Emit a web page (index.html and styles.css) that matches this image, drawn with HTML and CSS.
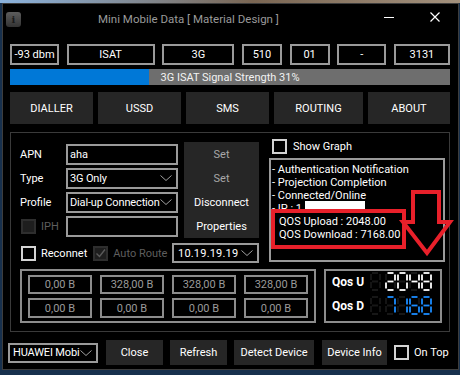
FILE: index.html
```html
<!DOCTYPE html>
<html lang="en">
<head>
  <meta charset="UTF-8" />
  <title>Mini Mobile Data</title>
  <link rel="stylesheet" href="styles.css">
</head>
<body>
  <div class="window">
    <header class="titlebar">
      <span class="app-icon">i</span>
      <span class="title">Mini Mobile Data [ Material Design ]</span>
      <span class="win-min"></span>
      <span class="win-close">
        <svg width="10" height="10" viewBox="0 0 10 10"><path d="M0.5 0.5L9.5 9.5M9.5 0.5L0.5 9.5" stroke="#fff" stroke-width="1.2" fill="none"/></svg>
      </span>
    </header>

    <div class="content">
      <div class="info-row">
        <div class="info w-dbm">-93 dbm</div>
        <div class="info w-op">ISAT</div>
        <div class="info w-net">3G</div>
        <div class="info w-mcc">510</div>
        <div class="info w-mnc">01</div>
        <div class="info w-lac">-</div>
        <div class="info w-cell">3131</div>
      </div>

      <div class="signal">
        <div class="signal-fill" style="width:31.6%"></div>
        <span>3G ISAT Signal Strength 31%</span>
      </div>

      <nav class="tabs">
        <button class="tab t-dialler">DIALLER</button>
        <button class="tab t-ussd">USSD</button>
        <button class="tab t-sms">SMS</button>
        <button class="tab t-routing">ROUTING</button>
        <button class="tab t-about">ABOUT</button>
      </nav>

      <section class="panel">
        <div class="upper">
          <div class="left-col">
            <div class="form-grid">
              <div class="fields">
                <span class="lbl">APN</span>
                <div class="input">aha</div>
                <span class="lbl">Type</span>
                <div class="select">3G Only<svg class="chev" width="12" height="6" viewBox="0 0 12 6"><path d="M0.5 0.5L6 5.5L11.5 0.5" stroke="#a0a0a0" fill="none"/></svg></div>
                <span class="lbl">Profile</span>
                <div class="select">Dial-up Connection<svg class="chev" width="12" height="6" viewBox="0 0 12 6"><path d="M0.5 0.5L6 5.5L11.5 0.5" stroke="#a0a0a0" fill="none"/></svg></div>
                <span class="check-label disabled"><span class="check check-dis"></span>IPH</span>
                <div class="input"></div>
              </div>
              <div class="side-buttons">
                <button class="side dim">Set</button>
                <button class="side dim">Set</button>
                <button class="side">Disconnect</button>
                <button class="side">Properties</button>
              </div>
            </div>

            <div class="route-row">
              <span class="check-label"><span class="check"></span>Reconnet</span>
              <span class="check-label disabled auto">
                <span class="check check-dis">
                  <svg width="11" height="11" viewBox="0 0 11 11"><path d="M1.5 5.5L4.5 8.5L10 1.5" stroke="#5a5a5a" stroke-width="1.4" fill="none"/></svg>
                </span>Auto Route</span>
              <div class="select ip-select">10.19.19.19<svg class="chev" width="12" height="6" viewBox="0 0 12 6"><path d="M0.5 0.5L6 5.5L11.5 0.5" stroke="#a0a0a0" fill="none"/></svg></div>
            </div>
          </div>

          <div class="right-col">
            <span class="check-label graph"><span class="check"></span>Show Graph</span>
            <div class="log">
              <div>- Authentication Notification</div>
              <div>- Projection Completion</div>
              <div>- Connected/Online</div>
              <div>- IP : 1</div>
              <div class="qos-line">QOS Upload : 2048.00</div>
              <div class="qos-line">QOS Download : 7168.00</div>
              <span class="redact"></span>
            </div>
          </div>
        </div>

        <div class="stats-row">
          <div class="stats">
            <div class="cell">0,00 B</div>
            <div class="cell">328,00 B</div>
            <div class="cell">328,00 B</div>
            <div class="cell">328,00 B</div>
            <div class="cell">0,00 B</div>
            <div class="cell">0,00 B</div>
            <div class="cell">0,00 B</div>
            <div class="cell">0,00 B</div>
          </div>
          <div class="qos">
            <div class="qos-row"><b>Qos U</b><svg class="seg up" data-value=" 2048" width="64" height="19"></svg></div>
            <div class="qos-row"><b>Qos D</b><svg class="seg down" data-value=" 7168" width="64" height="19"></svg></div>
          </div>
        </div>
      </section>

      <footer class="bottom-bar">
        <div class="select dev-select">HUAWEI Mobi<svg class="chev" width="12" height="6" viewBox="0 0 12 6"><path d="M0.5 0.5L6 5.5L11.5 0.5" stroke="#a0a0a0" fill="none"/></svg></div>
        <button class="btn b-close">Close</button>
        <button class="btn b-refresh">Refresh</button>
        <button class="btn b-detect">Detect Device</button>
        <button class="btn b-info">Device Info</button>
        <span class="check-label on-top"><span class="check"></span>On Top</span>
      </footer>
    </div>

    <!-- annotations drawn over the screenshot -->
    <svg class="annotations" width="455" height="366" viewBox="3 4 455 366">
      <rect x="273" y="211" width="131" height="36" fill="none" stroke="#e8202a" stroke-width="4"/>
      <path d="M413 192H439V222H450L427 253L403 222H413Z" fill="none" stroke="#e8202a" stroke-width="4" stroke-linejoin="miter"/>
    </svg>
  </div>

  <script>
    // seven segment digits for the QOS readout
    const SEGS = {
      a: "M2.5 1H8.5", b: "M10 2.5V8.5", c: "M10 10.5V16.5", d: "M2.5 18H8.5",
      e: "M1 10.5V16.5", f: "M1 2.5V8.5", g: "M2.5 9.5H8.5"
    };
    const DIGITS = {
      "0": "abcdef", "1": "bc", "2": "abdeg", "3": "abcdg", "4": "bcfg",
      "5": "acdfg", "6": "acdefg", "7": "abc", "8": "abcdefg", "9": "abcdfg", " ": ""
    };
    const OFFSETS = [0, 15, 27, 39, 51];

    document.querySelectorAll("svg.seg").forEach((svg) => {
      const value = svg.dataset.value;
      let html = "";
      [...value].forEach((ch, i) => {
        const lit = DIGITS[ch] || "";
        html += `<g transform="translate(${OFFSETS[i]},0)">`;
        Object.keys(SEGS).forEach((s) => {
          const cls = lit.includes(s) ? "on" : "off";
          html += `<path class="${cls}" d="${SEGS[s]}"/>`;
        });
        html += "</g>";
      });
      svg.innerHTML = html;
    });
  </script>
</body>
</html>
```

FILE: styles.css
```css
* { margin: 0; padding: 0; box-sizing: border-box; }
body { background: linear-gradient(90deg, #8bb3de, #7a6653 55%, #a3917d) top / 100% 3px no-repeat, #17304d; font-family: Roboto, sans-serif; font-size: 11px; color: #fff; white-space: nowrap; }
button { font: inherit; color: #fff; border: none; background: #262626; cursor: pointer; white-space: nowrap; }

.window { position: relative; margin: 3px 0 0 2px; width: 457px; height: 367px; background: #000; border: 1px solid #3d3d3d; }

/* title bar */
.titlebar { height: 30px; display: flex; align-items: center; }
.app-icon { width: 15px; height: 15px; margin-left: 3px; border-radius: 3px; background: linear-gradient(#5c5c5c, #333); color: #1a1a1a; font: bold 10px 'DejaVu Serif', serif; display: flex; align-items: center; justify-content: center; }
.title { margin-left: 77px; font-size: 11.5px; color: #9a9a9a; }
.win-min { margin-left: auto; width: 10px; height: 1px; background: #fff; margin-top: -3px; }
.win-close { margin-left: 36px; margin-right: 18px; display: flex; margin-top: -5px; }

.content { padding: 0 8px 0 7px; }

/* top info boxes */
.info-row { margin-top: 10px; height: 21px; display: flex; justify-content: space-between; }
.info { border: 2px solid #9a9a9a; display: flex; align-items: center; justify-content: center; }
.w-dbm { width: 49px; }
.w-op { width: 88px; }
.w-net { width: 72px; }
.w-mcc, .w-mnc { width: 40px; }
.w-lac { width: 49px; }
.w-cell { width: 56px; }

.signal { position: relative; margin-top: 4px; height: 16px; background: #6e6e6e; display: flex; align-items: center; justify-content: center; }
.signal-fill { position: absolute; left: 0; top: 0; bottom: 0; background: #0078d7; }
.signal span { position: relative; color: #f2f2f2; }

/* tabs */
.tabs { margin-top: 7px; height: 32px; display: flex; gap: 5px; }
.tab { width: 83px; }
.t-routing { width: 89px; }
.t-about { width: 82px; }

/* main panel */
.panel { margin-top: 8px; height: 200px; border: 1px solid #3a3a3a; padding: 6px 4px 0 9px; }
.upper { display: flex; gap: 10px; }
.left-col { width: 239px; padding-top: 3px; }
.form-grid { display: grid; grid-template-columns: 158px 75px; column-gap: 6px; }
.fields { display: grid; grid-template-columns: 46px 112px; grid-auto-rows: 24px; align-items: center; }
.input, .select { height: 21px; border: 2px solid #9a9a9a; padding-left: 2px; display: flex; align-items: center; overflow: hidden; }
.select { letter-spacing: -0.15px; }
.select .chev { margin-left: auto; margin-right: 4px; flex: none; }
.side-buttons { background: #262626; display: grid; grid-template-rows: repeat(4, 24px); }
.side { background: transparent; }
.side.dim { color: #a8a8a8; }

.check-label { display: flex; align-items: center; gap: 5px; }
.check { width: 15px; height: 15px; border: 2px solid #d4d4d4; display: flex; align-items: center; justify-content: center; flex: none; }
.check-label.disabled { color: #5e5e5e; }
.check-dis { border-color: #2e2e2e; background: #1e1e1e; }
.fields .check-label { margin-left: 1px; }

.route-row { margin-top: 5px; height: 20px; display: flex; align-items: center; }
.route-row > .check-label:first-child { margin-left: 1px; }
.auto { margin-left: 6px; }
.ip-select { margin-left: auto; width: 87px; height: 20px; padding-left: 4px; letter-spacing: 0.2px; }

.right-col { width: 176px; }
.graph { margin-left: 3px; height: 15px; gap: 6px; }
.log { position: relative; margin-top: 4px; height: 104px; border: 2px solid #9a9a9a; padding: 3px 0 0 1px; line-height: 13px; overflow: hidden; }
.qos-line { padding-left: 7px; }
.redact { position: absolute; left: 34px; top: 41px; width: 60px; height: 8px; background: #fff; }

/* traffic counters */
.stats-row { margin-top: 6px; display: flex; gap: 8px; }
.stats { width: 296px; height: 54px; border: 2px solid #8c8c8c; padding: 4px 6px; display: grid; grid-template-columns: repeat(4, 64px); grid-template-rows: 19px 20px; gap: 4px 8px; }
.cell { border: 2px solid #8c8c8c; display: flex; align-items: center; justify-content: center; color: #9a9a9a; }
.qos { width: 118px; height: 54px; border: 2px solid #8c8c8c; padding: 1px 0 0 6px; display: flex; flex-direction: column; gap: 5px; }
.qos-row { display: flex; align-items: center; height: 19px; }
.qos-row b { width: 38px; font-size: 12px; }
.seg path { fill: none; stroke-width: 1.8; }
.seg path.off { stroke: #2e2e2e; stroke-dasharray: 1 1; }
.seg.up path.on { stroke: #fff; }
.seg.down path.on { stroke: #1a8cff; }

/* bottom bar */
.bottom-bar { margin: 8px 0 0 -2px; height: 25px; display: flex; align-items: center; }
.dev-select { width: 90px; height: 20px; padding-left: 3px; }
.btn { height: 25px; }
.b-close { width: 57px; margin-left: 8px; }
.b-refresh { width: 57px; margin-left: 7px; }
.b-detect { width: 80px; margin-left: 7px; }
.b-info { width: 65px; margin-left: 8px; }
.on-top { margin-left: 7px; }

.annotations { position: absolute; left: 0; top: 0; pointer-events: none; }
```
